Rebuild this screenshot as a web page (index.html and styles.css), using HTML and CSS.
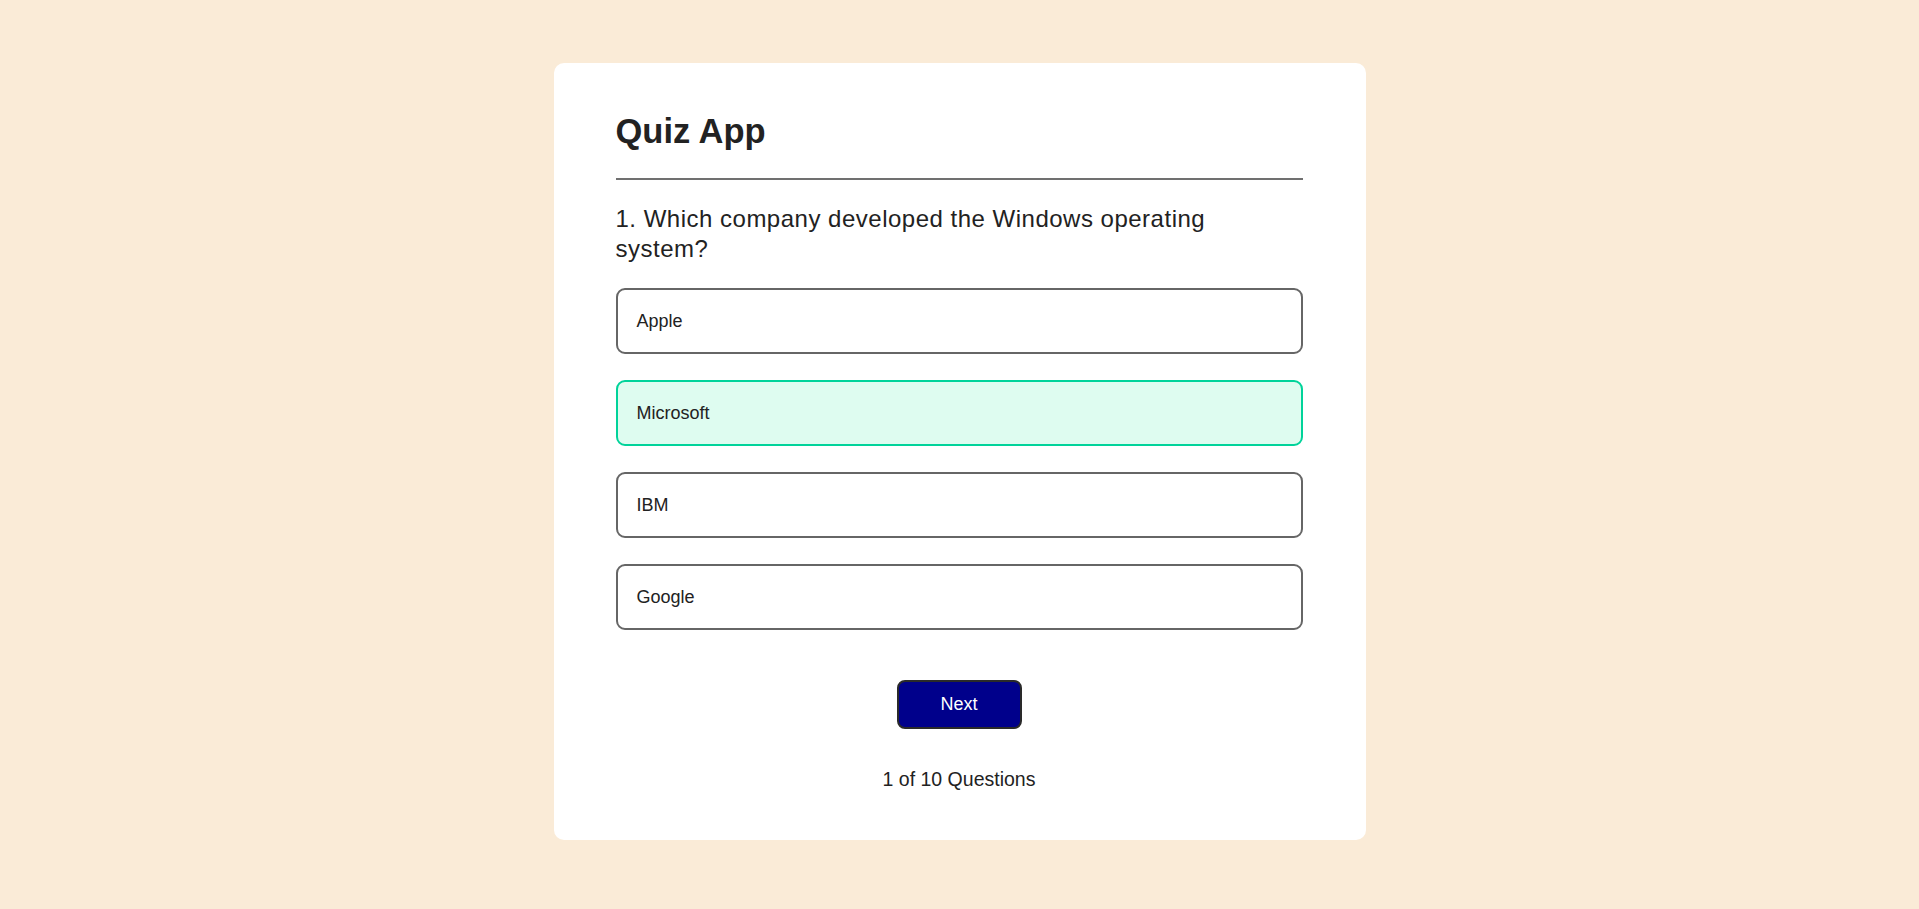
FILE: index.html
```html
<!DOCTYPE html>
<html lang="en">
<head>
<meta charset="utf-8">
<title>Quiz App</title>
<link rel="stylesheet" href="styles.css">
</head>
<body>
<main class="page">
  <section class="card">
    <h1 class="title">Quiz App</h1>
    <div class="divider"></div>
    <h2 class="question">1. Which company developed the Windows operating system?</h2>
    <ul class="options">
      <li class="option">Apple</li>
      <li class="option option-selected">Microsoft</li>
      <li class="option">IBM</li>
      <li class="option">Google</li>
    </ul>
    <div class="actions">
      <button class="next-btn" type="button">Next</button>
    </div>
    <p class="progress">1 of 10 Questions</p>
  </section>
</main>
</body>
</html>
```

FILE: styles.css
```css
* {
  box-sizing: border-box;
}

html, body {
  margin: 0;
  padding: 0;
}

body {
  background: #faebd7;
  font-family: "Liberation Sans", Arial, sans-serif;
  color: #222222;
  min-height: 909px;
}

.page {
  display: flex;
  justify-content: center;
  padding-top: 63px;
}

.card {
  width: 812px;
  background: #ffffff;
  border-radius: 10px;
  padding: 50px 63px 50px 62px;
}

.title {
  margin: 0;
  font-size: 34.5px;
  line-height: 37px;
  font-weight: 700;
  color: #222222;
}

.divider {
  height: 2px;
  background: #707070;
  margin-top: 28px;
}

.question {
  margin: 24px 0 0 0;
  max-width: 640px;
  font-size: 24px;
  line-height: 30px;
  font-weight: 400;
  letter-spacing: 0.5px;
  color: #222222;
}

.options {
  list-style: none;
  margin: 24px 0 0 0;
  padding: 0;
  display: flex;
  flex-direction: column;
  gap: 26px;
}

.option {
  height: 66px;
  border: 2px solid #666666;
  border-radius: 9px;
  padding: 0 19px;
  display: flex;
  align-items: center;
  font-size: 18px;
  color: #222222;
  background: #ffffff;
}

.option-selected {
  border-color: #00d39a;
  background: #defcf0;
}

.actions {
  display: flex;
  justify-content: center;
  margin-top: 50px;
}

.next-btn {
  width: 125px;
  height: 49px;
  background: #00008b;
  color: #ffffff;
  border: 2px solid #2a2a2a;
  border-radius: 8px;
  font-family: "Liberation Sans", Arial, sans-serif;
  font-size: 18px;
  padding: 0;
}

.progress {
  margin: 39px 0 0 0;
  text-align: center;
  font-size: 19.5px;
  line-height: 22px;
  color: #222222;
}
```
